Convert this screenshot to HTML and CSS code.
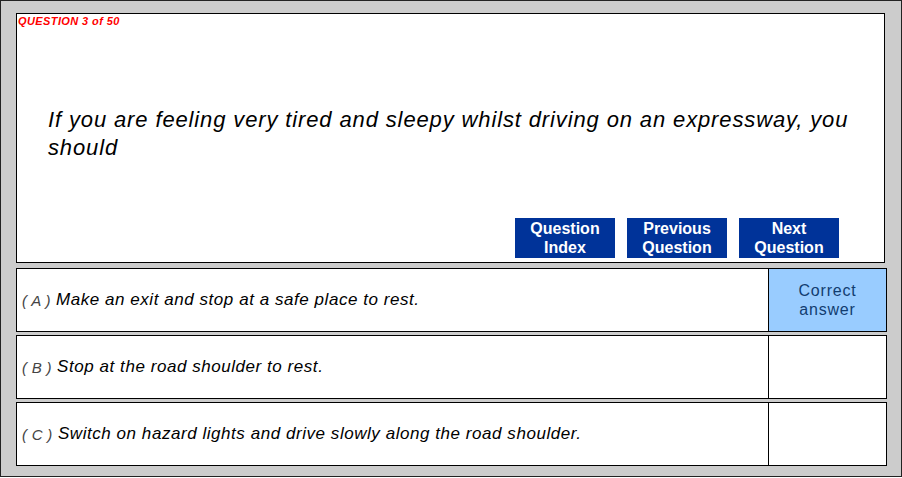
FILE: index.html
```html
<!DOCTYPE html>
<html>
<head>
<meta charset="utf-8">
<link rel="stylesheet" href="styles.css">
</head>
<body>
<div class="frame">
  <div class="qpanel">
    <div class="qnum">QUESTION 3 of 50</div>
    <div class="qtext">If you are feeling very tired and sleepy whilst driving on an expressway, you should</div>
    <div class="nav">
      <div class="btn">Question<br>Index</div>
      <div class="btn">Previous<br>Question</div>
      <div class="btn">Next<br>Question</div>
    </div>
  </div>
  <div class="answers">
    <div class="row first">
      <div class="opt"><span class="lbl">( A )</span> Make an exit and stop at a safe place to rest.</div>
      <div class="mark correct">Correct<br>answer</div>
    </div>
    <div class="row">
      <div class="opt"><span class="lbl">( B )</span> Stop at the road shoulder to rest.</div>
      <div class="mark"></div>
    </div>
    <div class="row">
      <div class="opt"><span class="lbl">( C )</span> Switch on hazard lights and drive slowly along the road shoulder.</div>
      <div class="mark"></div>
    </div>
  </div>
</div>
</body>
</html>
```
FILE: styles.css
```css
html, body {
  margin: 0;
  padding: 0;
  background: #ffffff;
}
body {
  font-family: "Liberation Sans", Arial, sans-serif;
}
.frame {
  box-sizing: border-box;
  width: 902px;
  height: 477px;
  border: 1px solid #222;
  background: #cccccc;
  padding: 12px 0 0 15px;
}
.qpanel {
  box-sizing: border-box;
  width: 869px;
  height: 250px;
  border: 1px solid #000;
  background: #fff;
  display: flex;
  flex-direction: column;
}
.qnum {
  color: #ff0000;
  font-size: 11px;
  font-weight: bold;
  font-style: italic;
  letter-spacing: 0.4px;
  line-height: 13px;
  padding: 1px 0 0 1px;
}
.qtext {
  font-size: 22px;
  font-style: italic;
  letter-spacing: 0.87px;
  line-height: 28px;
  color: #000;
  margin: 78px 0 0 31px;
  width: 815px;
}
.nav {
  margin-top: auto;
  display: flex;
  justify-content: flex-end;
  gap: 12px;
  padding: 0 45px 4px 0;
}
.btn {
  width: 100px;
  height: 40px;
  background: #003399;
  color: #fff;
  font-weight: bold;
  font-size: 16px;
  line-height: 19px;
  text-align: center;
  box-sizing: border-box;
  padding-top: 1px;
}
.answers {
  margin-top: 5px;
  display: flex;
  flex-direction: column;
  gap: 3px;
}
.row {
  box-sizing: border-box;
  width: 871px;
  height: 64px;
  border: 1px solid #000;
  background: #fff;
  display: grid;
  grid-template-columns: 752px 1fr;
}
.opt {
  border-right: 1px solid #000;
  display: flex;
  align-items: center;
  padding-left: 5px;
  font-size: 17px;
  font-style: italic;
  letter-spacing: 0.55px;
  color: #000;
  white-space: pre;
}
.lbl {
  color: #444;
  font-size: 15px;
  letter-spacing: 0.3px;
}
.mark {
  display: flex;
  align-items: center;
  justify-content: center;
  text-align: center;
  font-size: 16px;
  letter-spacing: 0.8px;
  line-height: 19px;
  color: #123d70;
}
.mark.correct {
  background: #99ccff;
}
```
